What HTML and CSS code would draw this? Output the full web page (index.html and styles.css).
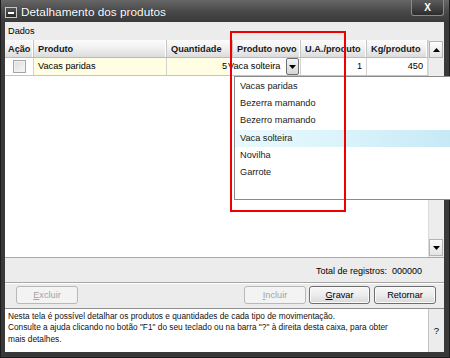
FILE: index.html
```html
<!DOCTYPE html>
<html lang="pt">
<head>
<meta charset="utf-8">
<title>Detalhamento dos produtos</title>
<link rel="stylesheet" href="styles.css">
</head>
<body>
<div class="window">
  <div class="titlebar">
    <div class="sysicon"><span></span></div>
    <div class="title">Detalhamento dos produtos</div>
    <div class="close">X</div>
  </div>
  <div class="frame">
    <div class="client">
      <div class="section-label">Dados</div>
      <div class="grid">
        <div class="grid-main">
          <div class="grid-head">
            <div class="th c1">Ação</div>
            <div class="th c2">Produto</div>
            <div class="th c3">Quantidade</div>
            <div class="th c4">Produto novo</div>
            <div class="th c5">U.A./produto</div>
            <div class="th c6">Kg/produto</div>
          </div>
          <div class="grid-row">
            <div class="td c1 check-cell"><span class="checkbox"></span></div>
            <div class="td c2 yellow">Vacas paridas</div>
            <div class="td c3 yellow num">5</div>
            <div class="td c4 combo-cell">
              <div class="combo">
                <span class="combo-text">Vaca solteira</span>
                <span class="combo-btn"><svg width="7" height="4" viewBox="0 0 7 4"><path d="M0 0h7L3.5 4z" fill="#000"/></svg></span>
              </div>
            </div>
            <div class="td c5 num">1</div>
            <div class="td c6 num">450</div>
          </div>
        </div>
        <div class="vscroll">
          <div class="sbtn"><svg width="7" height="4" viewBox="0 0 7 4"><path d="M0 4h7L3.5 0z" fill="#000"/></svg></div>
          <div class="strack"></div>
          <div class="sbtn"><svg width="7" height="4" viewBox="0 0 7 4"><path d="M0 0h7L3.5 4z" fill="#000"/></svg></div>
        </div>
      </div>
      <div class="status">Total de registros:&nbsp; 000000</div>
      <div class="buttons">
        <button class="btn disabled"><u>E</u>xcluir</button>
        <div class="spacer"></div>
        <button class="btn disabled"><u>I</u>ncluir</button>
        <button class="btn"><u>G</u>ravar</button>
        <button class="btn">Retornar</button>
      </div>
      <div class="help">
        <div class="help-text">Nesta tela é possível detalhar os produtos e quantidades de cada tipo de movimentação.<br>Consulte a ajuda clicando no botão "F1" do seu teclado ou na barra "?" à direita desta caixa, para obter<br>mais detalhes.</div>
        <div class="help-q">?</div>
      </div>
    </div>
  </div>

  <ul class="dropdown">
    <li>Vacas paridas</li>
    <li>Bezerra mamando</li>
    <li>Bezerro mamando</li>
    <li class="hover">Vaca solteira</li>
    <li>Novilha</li>
    <li>Garrote</li>
  </ul>
  <div class="mark"></div>
</div>
</body>
</html>
```

FILE: styles.css
```css
* { box-sizing: border-box; }
html, body { margin: 0; padding: 0; }
body {
  width: 450px;
  height: 358px;
  overflow: hidden;
  font-family: "Liberation Sans", Arial, sans-serif;
  font-size: 9.2px;
  color: #000;
  background: #2a2a2a;
}
.window {
  position: relative;
  width: 450px;
  height: 358px;
  display: flex;
  flex-direction: column;
  background: linear-gradient(to bottom, #666 0, #484848 12px, #3a3a3a 22px, #393939 100%);
  border: 1px solid #1c1c1c;
  border-top: none;
}
.titlebar {
  height: 22px;
  display: flex;
  align-items: center;
  padding-left: 4px;
  flex: none;
}
.sysicon {
  width: 12px;
  height: 11px;
  border: 1px solid #c8c8c8;
  background: linear-gradient(#555, #2b2b2b);
  display: flex;
  align-items: center;
  justify-content: center;
  margin-top: 3px;
}
.sysicon span {
  width: 6px;
  height: 2px;
  background: #fff;
}
.title {
  margin-left: 4px;
  margin-top: 2px;
  color: #fff;
  font-size: 11.8px;
  text-shadow: 0 0 1px rgba(0,0,0,0.6);
}
.close {
  margin-left: auto;
  margin-right: 5px;
  align-self: flex-start;
  width: 33px;
  height: 16px;
  border: 1px solid #8a8a8a;
  border-top: none;
  border-radius: 0 0 3px 3px;
  background: linear-gradient(#5c5c5c, #2c2c2c);
  color: #fff;
  font-weight: bold;
  font-size: 10px;
  line-height: 15px;
  text-align: center;
}
.frame {
  flex: 1;
  display: flex;
  padding: 0 5px 5px 4px;
}
.client {
  flex: 1;
  display: flex;
  flex-direction: column;
  background: #ececec;
}
.section-label {
  height: 18px;
  line-height: 19px;
  padding-left: 3px;
  flex: none;
}
.grid {
  height: 218px;
  flex: none;
  display: flex;
  background: #fff;
  border-bottom: 1px solid #a9a9a9;
}
.grid-main {
  width: 423px;
}
.grid-head {
  display: flex;
  height: 18px;
  background: linear-gradient(#fbfbfb, #f1f1f1 45%, #dcdcdc);
  border-bottom: 1px solid #b9b9b9;
}
.th {
  font-weight: bold;
  color: #1a1a1a;
  line-height: 18px;
  padding-left: 4px;
  border-right: 1px solid #c6c6c6;
  box-shadow: inset -1px 0 #fff;
  white-space: nowrap;
  overflow: hidden;
}
.th.c1 { padding-left: 3px; }
.c1 { width: 29px; }
.c2 { width: 133px; }
.c3 { width: 66px; }
.c4 { width: 68px; }
.c5 { width: 66px; }
.c6 { width: 61px; }
.grid-row {
  display: flex;
  height: 18px;
  border-bottom: 1px solid #c4c4c4;
}
.td {
  line-height: 17px;
  padding-left: 4px;
  border-right: 1px solid #d2d2d2;
  white-space: nowrap;
}
.td.num { text-align: right; padding-right: 4px; padding-left: 0; }
.td.c3.num { padding-right: 5px; }
.yellow { background: #fffde2; }
.check-cell {
  display: flex;
  align-items: center;
  justify-content: center;
  padding: 0;
}
.checkbox {
  width: 13px;
  height: 13px;
  border: 1px solid #a6a6a6;
  background: linear-gradient(135deg, #dedede, #f6f6f6);
  box-shadow: inset 0 0 0 1px #f2f2f2;
}
.combo-cell {
  padding: 0;
  border-right: 1px solid #d2d2d2;
}
.combo {
  margin-left: -5px;
  height: 17px;
  display: flex;
  align-items: center;
  background: #fff;
}
.combo-text {
  flex: 1;
  line-height: 17px;
  overflow: hidden;
  white-space: nowrap;
}
.combo-btn {
  width: 13px;
  height: 17px;
  border: 1px solid #6f6f6f;
  border-radius: 2px;
  background: linear-gradient(#f4f4f4, #d6d6d6);
  display: flex;
  align-items: center;
  justify-content: center;
  margin-right: 1px;
}
.vscroll {
  width: 16px;
  display: flex;
  flex-direction: column;
  background: #ededed;
  border-left: 1px solid #dadada;
  padding: 1px 0 1px 0;
}
.sbtn {
  height: 17px;
  margin-right: 1px;
  border: 1px solid #b4b4b4;
  background: linear-gradient(#fdfdfd, #e3e3e3);
  display: flex;
  align-items: center;
  justify-content: center;
}
.strack { flex: 1; }
.status {
  height: 25px;
  flex: none;
  line-height: 26px;
  text-align: right;
  padding-right: 22px;
  font-size: 9px;
  border-bottom: 1px solid #a6a6a6;
  box-shadow: 0 1px #fff;
}
.buttons {
  height: 25px;
  flex: none;
  display: flex;
  align-items: flex-start;
  padding: 3px 8px 0 11px;
  gap: 3px;
}
.spacer { flex: 1; }
.btn {
  width: 61px;
  height: 18px;
  padding: 0;
  font-family: inherit;
  font-size: 9.2px;
  color: #000;
  border: 1px solid #6e6e6e;
  border-radius: 3px;
  background: linear-gradient(#f7f7f7, #ececec 50%, #d9d9d9);
  box-shadow: inset 0 0 0 1px #fbfbfb;
  line-height: 15px;
}
.btn.disabled {
  width: 62px;
  color: #a3a3a3;
  border-color: #b8b8b8;
  background: #f3f3f3;
  box-shadow: none;
}
.buttons .btn:last-child { width: 62px; margin-left: 1px; }
.help {
  flex: 1;
  display: flex;
  background: #fff;
  border-top: 1px solid #8f8f8f;
}
.help-text {
  flex: 1;
  font-size: 8.3px;
  line-height: 11.3px;
  padding: 2px 0 0 3px;
  color: #111;
  white-space: nowrap;
}
.help-q {
  width: 16px;
  background: #ececec;
  border-left: 1px solid #c4c4c4;
  display: flex;
  align-items: center;
  justify-content: center;
  font-size: 9.5px;
}
.dropdown {
  position: absolute;
  left: 233px;
  top: 76px;
  width: 220px;
  height: 124px;
  margin: 0;
  padding: 1px 0 0;
  list-style: none;
  background: #fff;
  border: 1px solid #8a8a8a;
}
.dropdown li {
  height: 17.2px;
  line-height: 17.2px;
  padding-left: 5px;
  color: #1a1a1a;
}
.dropdown li.hover {
  background: linear-gradient(to right, #e9f9fd 0%, #dcf4fb 45%, #c6e9f6 100%);
}
.mark {
  position: absolute;
  left: 229px;
  top: 31px;
  width: 116px;
  height: 181px;
  border: 2px solid #ee0000;
}
```
